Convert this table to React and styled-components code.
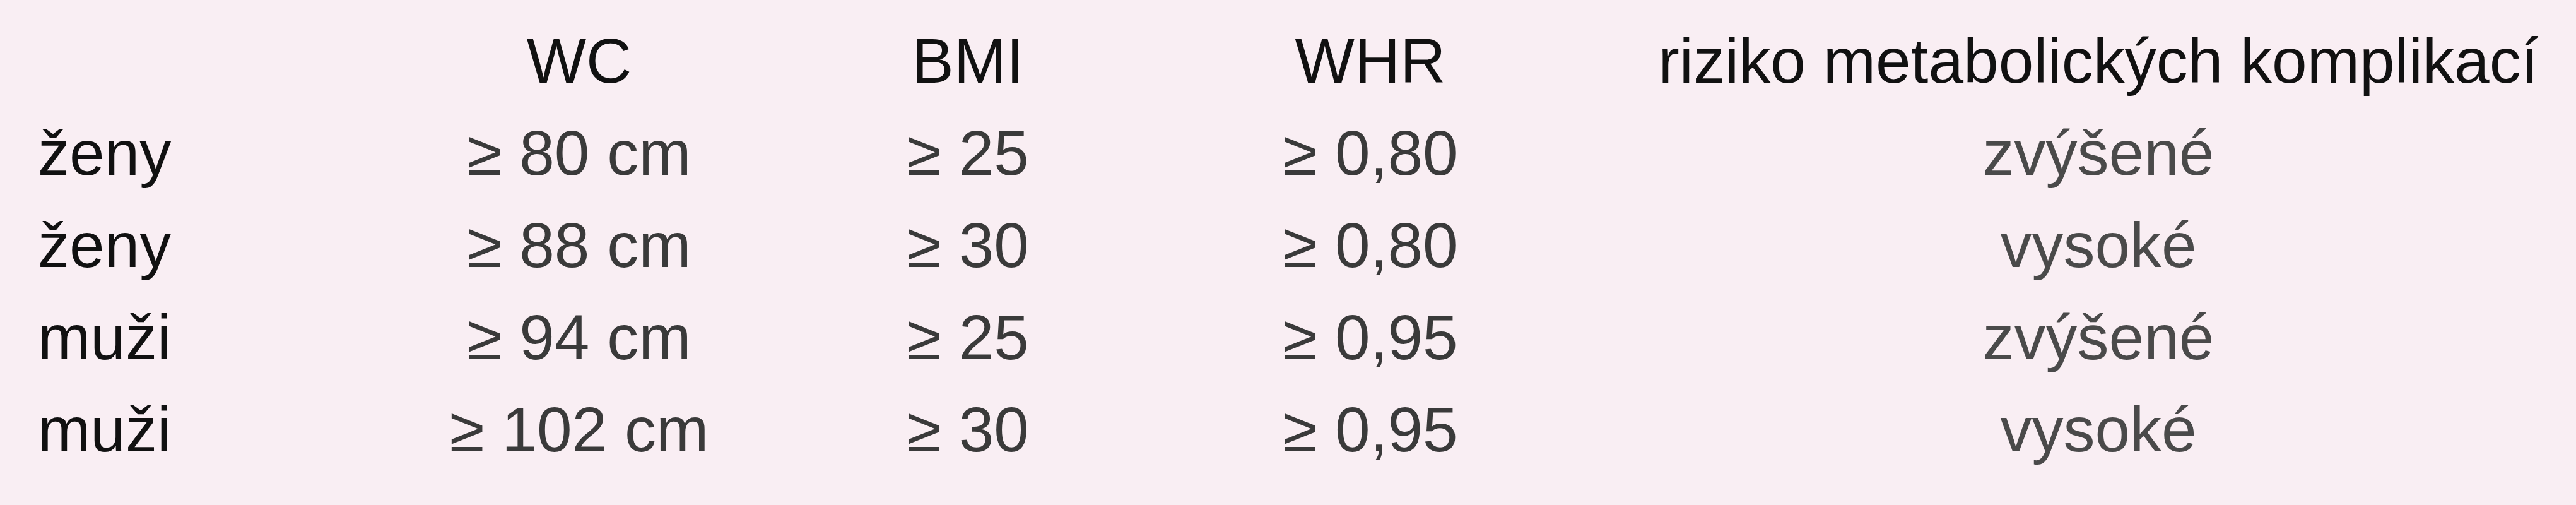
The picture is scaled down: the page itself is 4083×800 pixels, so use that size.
import { Fragment } from "react";
import styled, { createGlobalStyle } from "styled-components";

const GlobalStyle = createGlobalStyle`
  html, body {
    margin: 0;
    padding: 0;
    background: #f9eef3;
  }
  body {
    font-family: "Liberation Sans", Arial, Helvetica, sans-serif;
    overflow: hidden;
  }
`;

const rows = [
  { who: "ženy", wc: "≥ 80 cm", bmi: "≥ 25", whr: "≥ 0,80", risk: "zvýšené" },
  { who: "ženy", wc: "≥ 88 cm", bmi: "≥ 30", whr: "≥ 0,80", risk: "vysoké" },
  { who: "muži", wc: "≥ 94 cm", bmi: "≥ 25", whr: "≥ 0,95", risk: "zvýšené" },
  { who: "muži", wc: "≥ 102 cm", bmi: "≥ 30", whr: "≥ 0,95", risk: "vysoké" },
];

const Page = styled.div`
  width: 4083px;
  height: 800px;
  box-sizing: border-box;
  padding: 23px 0 0 60px;
  background: #f9eef3;
`;

// column widths chosen so each column's centre sits where the reference has it
const Table = styled.div`
  display: grid;
  grid-template-columns: 452px 812px 420px 856px 1452px;
  grid-auto-rows: 146px;
  font-size: 100px;
  line-height: 146px;
`;

const Head = styled.div`
  color: #111;
  text-align: center;
  white-space: nowrap;
`;

const Label = styled.div`
  color: #111;
  white-space: nowrap;
`;

const Value = styled.div`
  color: ${(p) => (p.$muted ? "#4a4a4a" : "#3a3a3a")};
  text-align: center;
  white-space: nowrap;
`;

export default function App() {
  return (
    <>
      <GlobalStyle />
      <Page>
        <Table>
          <Label />
          <Head>WC</Head>
          <Head>BMI</Head>
          <Head>WHR</Head>
          <Head>riziko metabolických komplikací</Head>
          {rows.map((r, i) => (
            <Fragment key={i}>
              <Label>{r.who}</Label>
              <Value>{r.wc}</Value>
              <Value>{r.bmi}</Value>
              <Value>{r.whr}</Value>
              <Value $muted>{r.risk}</Value>
            </Fragment>
          ))}
        </Table>
      </Page>
    </>
  );
}
